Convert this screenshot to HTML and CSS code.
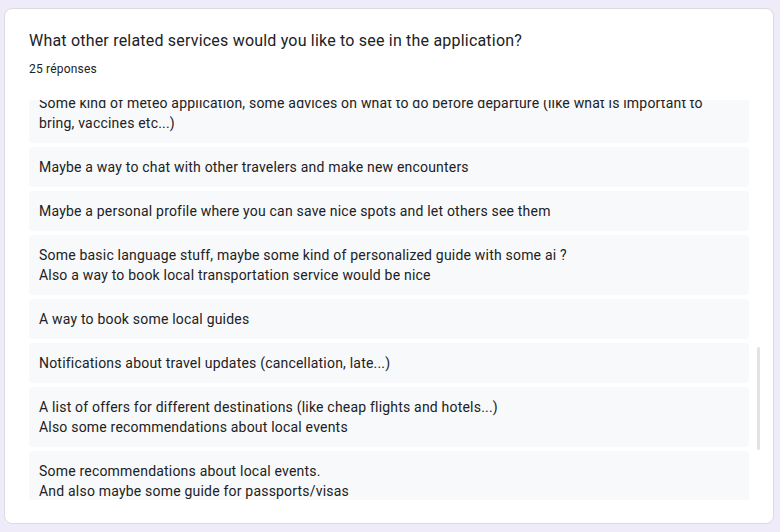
FILE: index.html
```html
<!DOCTYPE html>
<html lang="fr">
<head>
<meta charset="utf-8">
<link rel="stylesheet" href="styles.css">
</head>
<body>
<div class="card">
  <div class="header">
    <div class="title">What other related services would you like to see in the application?</div>
    <div class="count">25 réponses</div>
  </div>
  <div class="viewport">
    <div class="list">
      <div class="item">Some kind of meteo application, some advices on what to do before departure (like what is important to bring, vaccines etc...)</div>
      <div class="item">Maybe a way to chat with other travelers and make new encounters</div>
      <div class="item">Maybe a personal profile where you can save nice spots and let others see them</div>
      <div class="item">Some basic language stuff, maybe some kind of personalized guide with some ai ?<br>Also a way to book local transportation service would be nice</div>
      <div class="item">A way to book some local guides</div>
      <div class="item">Notifications about travel updates (cancellation, late...)</div>
      <div class="item">A list of offers for different destinations (like cheap flights and hotels...)<br>Also some recommendations about local events</div>
      <div class="item">Some recommendations about local events.<br>And also maybe some guide for passports/visas</div>
    </div>
    <div class="thumb"></div>
  </div>
</div>
</body>
</html>
```

FILE: styles.css
```css
html, body {
  margin: 0;
  padding: 0;
}
body {
  background: #f0ebf8;
  font-family: Roboto, "Noto Sans", Arial, sans-serif;
  color: #202124;
  width: 780px;
  height: 532px;
  overflow: hidden;
}
.card {
  box-sizing: border-box;
  margin: 8px 0 0 4px;
  width: 770px;
  height: 516px;
  background: #fff;
  border: 1px solid #dadce0;
  border-radius: 8px;
  padding: 0 0 0 24px;
}
.header {
  padding-top: 20px;
  height: 71px;
  box-sizing: border-box;
}
.title {
  font-size: 16px;
  line-height: 24px;
  letter-spacing: .2px;
  color: #202124;
}
.count {
  margin-top: 8px;
  font-size: 12px;
  line-height: 16px;
  letter-spacing: .2px;
  color: #202124;
}
.viewport {
  position: relative;
  margin-top: 20px;
  width: 734px;
  height: 400px;
  overflow: hidden;
}
.list {
  display: flex;
  flex-direction: column;
  gap: 4px;
  width: 720px;
  margin-top: -17px;
}
.item {
  background: #f8f9fa;
  border-radius: 4px;
  padding: 10px;
  font-size: 14px;
  line-height: 20px;
  letter-spacing: .2px;
  color: #202124;
}
.thumb {
  position: absolute;
  left: 728px;
  top: 247px;
  width: 3px;
  height: 103px;
  border-radius: 2px;
  background: #e3e3e3;
}
```
